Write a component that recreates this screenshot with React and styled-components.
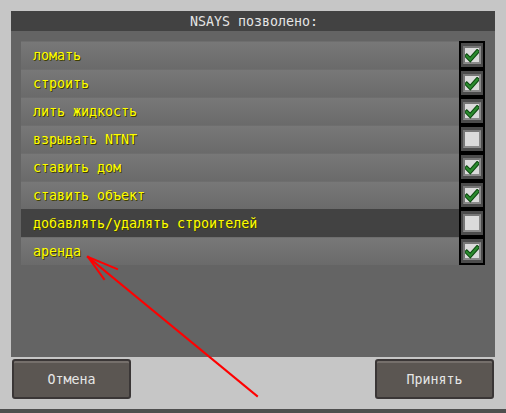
import React from 'react';
import styled, { createGlobalStyle } from 'styled-components';

const GlobalStyle = createGlobalStyle`
  html, body {
    margin: 0;
    padding: 0;
    background: #c6c6c6;
  }
`;

const items = [
  { label: 'ломать', checked: true },
  { label: 'строить', checked: true },
  { label: 'лить жидкость', checked: true },
  { label: 'взрывать NTNT', checked: false },
  { label: 'ставить дом', checked: true },
  { label: 'ставить объект', checked: true },
  { label: 'добавлять/удалять строителей', checked: false, active: true },
  { label: 'аренда', checked: true },
];

const CheckMark = () => (
  <svg width="16" height="14" viewBox="0 0 16 14">
    <polyline points="2,7 6,11 14,2" fill="none" stroke="#0f4a12" strokeWidth="5" strokeLinecap="square" />
    <polyline points="2,7 6,11 14,2" fill="none" stroke="#2b8a2e" strokeWidth="2.6" strokeLinecap="square" />
  </svg>
);

const App = () => {
  return (
    <>
      <GlobalStyle />
      <Screen>
        <Window>
          <Header>NSAYS позволено:</Header>
          <Panel>
            {items.map((item) => (
              <Row key={item.label}>
                <Label active={item.active}>{item.label}</Label>
                <CheckCell>
                  <CheckWell>
                    <CheckBox>{item.checked && <CheckMark />}</CheckBox>
                  </CheckWell>
                </CheckCell>
              </Row>
            ))}
          </Panel>
          <Footer>
            <Button>Отмена</Button>
            <Button>Принять</Button>
          </Footer>
        </Window>
        <BottomBand />
        <Arrow width="506" height="413" viewBox="0 0 506 413">
          <g stroke="#ff0000" strokeWidth="2" fill="none" strokeLinecap="square">
            <line x1="88" y1="257" x2="257" y2="396" />
            <line x1="88" y1="257" x2="117" y2="269" />
            <line x1="88" y1="257" x2="104" y2="279" />
          </g>
        </Arrow>
      </Screen>
    </>
  );
};

const Screen = styled.div`
  position: relative;
  width: 506px;
  height: 413px;
  background: #c6c6c6;
  font-family: "DejaVu Sans Mono", "Liberation Mono", monospace;
  font-size: 13.3px;
  overflow: hidden;
  display: flex;
  flex-direction: column;
`;

const Window = styled.div`
  flex: 1;
  display: flex;
  flex-direction: column;
  padding: 11px 11px 0 11px;
`;

const Header = styled.div`
  height: 20px;
  background: #424242;
  color: #e6e6e6;
  display: flex;
  align-items: center;
  justify-content: center;
  padding-left: 2px;
`;

const Panel = styled.div`
  height: 326px;
  box-sizing: border-box;
  background: #646464;
  padding: 10px 10px 0 10px;
  display: flex;
  flex-direction: column;
`;

const Row = styled.div`
  display: flex;
  height: 28px;
`;

const Label = styled.div`
  flex: 1;
  display: flex;
  align-items: center;
  padding-left: 12px;
  padding-bottom: 1px;
  color: #ffff00;
  text-shadow: 1px 1px 0 #3f3f00;
  background: ${(p) => (p.active ? '#424242' : 'linear-gradient(#787878, #6a6a6a)')};
  border-top: 1px solid ${(p) => (p.active ? '#424242' : '#6e6e6e')};
`;

const CheckCell = styled.div`
  width: 26px;
  box-sizing: border-box;
  background: #000;
  padding: 2px;
  display: flex;
`;

const CheckWell = styled.div`
  flex: 1;
  background: #4c4c4c;
  display: flex;
  align-items: center;
  justify-content: center;
`;

const CheckBox = styled.div`
  width: 18px;
  height: 18px;
  box-sizing: border-box;
  background: #dbdbdb;
  border: 2px solid #8b8b8b;
  border-top-color: #777;
  border-left-color: #777;
  display: flex;
  align-items: center;
  justify-content: center;
  svg {
    margin-top: 1px;
  }
`;

const Footer = styled.div`
  height: 52px;
  box-sizing: border-box;
  display: flex;
  justify-content: space-between;
  padding: 2px 1px 0 1px;
`;

const Button = styled.div`
  width: 119px;
  height: 40px;
  box-sizing: border-box;
  background: #5b5652;
  border: 2px solid #3a3636;
  border-radius: 3px;
  box-shadow: inset 0 2px 0 #756f6b;
  color: #e6e6e6;
  display: flex;
  align-items: center;
  justify-content: center;
`;

const BottomBand = styled.div`
  height: 4px;
  background: #4f4f4f;
`;

const Arrow = styled.svg`
  position: absolute;
  left: 0;
  top: 0;
  pointer-events: none;
`;

export default App;
